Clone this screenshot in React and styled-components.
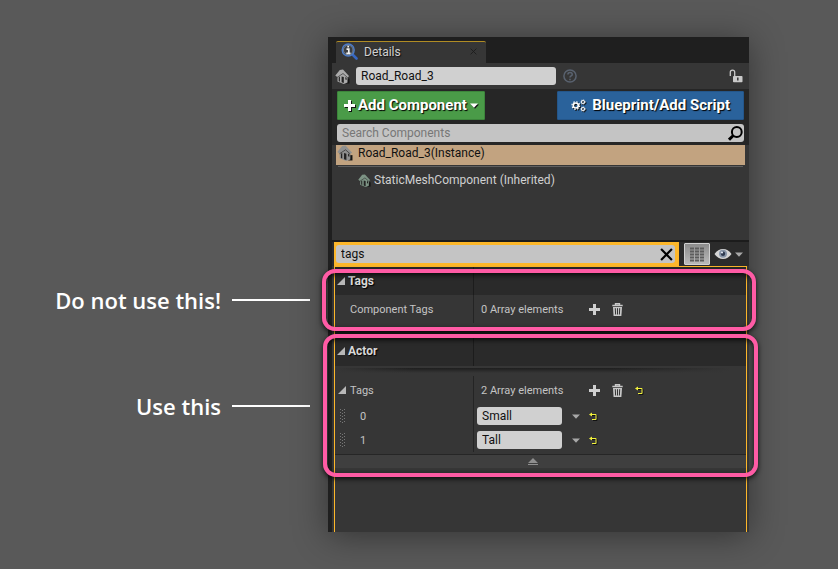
import React from 'react';
import styled, { createGlobalStyle } from 'styled-components';

const Global = createGlobalStyle`
  *, *::before, *::after { box-sizing: border-box; }
  body { margin: 0; background: #595959; font-family: Roboto, "Liberation Sans", sans-serif; font-size: 12px; color: #c4c4c4; }
  button, input { font: inherit; color: inherit; }
  svg { display: block; flex: none; }
`;

const Page = styled.main`
  min-height: 100vh;
  display: grid;
  grid-template-columns: 310px minmax(0, 1fr);
  column-gap: 18px;
  padding: 37px 89px 37px 0;
  overflow: hidden;
`;

const Callouts = styled.div`
  display: flex;
  flex-direction: column;
  gap: 74px;
  padding-top: 247px;
`;

const Callout = styled.p`
  display: flex;
  align-items: center;
  justify-content: flex-end;
  gap: 11px;
  margin: 0;
  height: 32px;
  color: #fff;
  font: 600 22px/32px "Open Sans", "Noto Sans", sans-serif;
  white-space: nowrap;

  &::after {
    content: "";
    width: 78px;
    height: 2px;
    background: #fff;
  }
`;

const Panel = styled.section`
  display: flex;
  flex-direction: column;
  padding-left: 4px;
  background: #1f1f1f;
  box-shadow: 0 4px 32px rgba(0, 0, 0, 0.42);
`;

const TabBar = styled.div`
  display: flex;
  padding: 4px 4px 0;
`;

const Tab = styled.div`
  display: flex;
  align-items: center;
  gap: 6px;
  width: 150px;
  height: 22px;
  padding: 0 9px 2px 5px;
  border-top: 1px solid #b08c24;
  border-radius: 2px 2px 0 0;
  background: #363636;
  color: #d0d0d0;
  text-shadow: 1px 1px 1px #111;
`;

const TabLabel = styled.span`
  flex: 1;
`;

const IconButton = styled.button`
  display: grid;
  place-items: center;
  flex: none;
  padding: 0;
  border: 0;
  background: none;
  color: ${(p) => p.$color || '#d0d0d0'};
`;

const NameRow = styled.div`
  display: flex;
  align-items: center;
  height: 26px;
  padding: 0 6px 0 3px;
  background: #363636;
`;

const Field = styled.input`
  width: ${(p) => p.$width || '100%'};
  height: 18px;
  min-width: 0;
  padding: 0 5px;
  border: 0;
  border-radius: 3px;
  outline: none;
  background: ${(p) => p.$bg || '#d0d0d0'};
  color: #111;
  font-size: 12px;
  &::placeholder { color: #777; opacity: 1; }
`;

const NameField = styled(Field)`
  margin: 0 7px 0 6px;
`;

const Spacer = styled.span`
  flex: 1;
`;

const ActionArea = styled.div`
  display: flex;
  flex-direction: column;
  gap: 4px;
  padding: 2px 5px 3px;
  background: #262626;
`;

const ActionRow = styled.div`
  display: flex;
  justify-content: space-between;
`;

const ActionButton = styled.button`
  display: flex;
  align-items: center;
  justify-content: center;
  gap: ${(p) => p.$gap};
  height: 29px;
  padding: ${(p) => p.$padding};
  border: 1px solid ${(p) => p.$edge};
  border-radius: 1px;
  background: ${(p) => p.$bg};
  color: #fff;
  font-size: 15px;
  font-weight: 700;
  text-shadow: 1px 1px 1px #000;
  white-space: nowrap;
  svg { filter: drop-shadow(1px 1px 0 #111); }
`;

const SearchBox = styled.label`
  display: flex;
  align-items: center;
  height: 18px;
  padding-right: 1px;
  border-radius: 3px;
  background: #c4c4c4;
  color: #000;
`;

const Tree = styled.ul`
  display: flex;
  flex-direction: column;
  height: 95px;
  margin: 0;
  padding: 0 4px;
  list-style: none;
  background: #363636;
`;

const TreeItem = styled.li`
  display: flex;
  align-items: center;
  gap: ${(p) => (p.$selected ? '5px' : '3px')};
  height: ${(p) => (p.$selected ? '20px' : '26px')};
  padding: ${(p) => (p.$selected ? '0 0 4px 1px' : '0 0 0 22px')};
  background: ${(p) => (p.$selected ? '#c2a380' : 'none')};
  color: ${(p) => (p.$selected ? '#111' : '#d0d0d0')};
`;

const TreeRule = styled.li`
  height: 1px;
  margin: 1px 2px 0;
  background: #606060;
`;

const FilterRow = styled.div`
  display: flex;
  padding: 0 6px 0 2px;
  border-top: 2px solid #1c1c1c;
  background: #2b2b2b;
`;

const FilterBox = styled.label`
  display: flex;
  flex: 1;
  height: 24px;
  padding: 3px 4px 3px 2px;
  background: #fdb72a;
`;

const FilterInner = styled.span`
  display: flex;
  flex: 1;
  align-items: center;
  padding-right: 2px;
  border-radius: 3px;
  background: #c4c4c4;
`;

const GridToggle = styled.button`
  display: grid;
  place-items: center;
  width: 26px;
  height: 22px;
  margin: 1px 4px 0 5px;
  padding: 0;
  border: 1px solid #d0d0d0;
  border-radius: 1px;
  background: linear-gradient(#8c8c8c, #bababa);
`;

const ViewButton = styled(IconButton)`
  display: flex;
  align-items: center;
  gap: 3px;
`;

const Frame = styled.div`
  flex: 1;
  margin: 0 2px 0 0;
  padding-bottom: 64px;
  border: solid #fdb72a;
  border-width: 1px 1px 0;
  background: #363636;
`;

const FrameGutter = styled.div`
  display: flex;
  flex: 1;
  flex-direction: column;
  padding-left: 2px;
  background: #363636;
`;

const Section = styled.section`
  position: relative;
  padding-bottom: ${(p) => p.$pad};
  background: #363636;
`;

const Separator = styled.div`
  height: 5px;
  background: #1e1e1e;
`;

const columns = '139px minmax(0, 1fr)';

const SectionHeader = styled.h2`
  display: grid;
  grid-template-columns: ${columns};
  height: ${(p) => p.$height};
  margin: 0;
  background: #2a2a2a;
  color: #d8d8d8;
  font-size: 12px;
  font-weight: 700;
  text-shadow: 1px 1px 1px #000;
`;

const HeaderCell = styled.span`
  display: flex;
  align-items: center;
  gap: 3px;
  padding-left: 2px;
  border-right: 1px solid #1c1c1c;
`;

const FadeRule = styled.div`
  height: 5px;
  margin: 2px 16px 3px 0;
  background: linear-gradient(90deg, #363636, transparent 20%, transparent 70%, #363636), linear-gradient(#1e1e1e, #363636);
`;

const Row = styled.div`
  display: grid;
  grid-template-columns: ${columns};
  height: ${(p) => p.$height};
  font-size: 11px;
`;

const NameCell = styled.div`
  display: flex;
  align-items: center;
  gap: ${(p) => p.$gap || '4px'};
  padding-left: ${(p) => p.$indent};
  border-right: 1px solid #242424;
`;

const ValueCell = styled.div`
  display: flex;
  align-items: center;
  padding-left: ${(p) => p.$indent || '7px'};
`;

const Count = styled.span`
  width: 108px;
`;

const Tools = styled.span`
  display: flex;
  align-items: center;
  gap: ${(p) => p.$gap || '12px'};
  margin-left: ${(p) => p.$inset || '0'};
`;

const Footer = styled.button`
  display: grid;
  place-items: center;
  width: 100%;
  height: 14px;
  margin-top: 2px;
  padding: 0 16px 0 0;
  border: 0;
  border-top: 1px solid #262626;
  background: #3f3f3f;
`;

const Highlight = styled.div`
  position: absolute;
  inset: ${(p) => p.$inset};
  z-index: 2;
  pointer-events: none;
  border: 4px solid #ff5ba5;
  border-radius: 13px;
  box-shadow: 0 2px 5px rgba(0, 0, 0, 0.75), inset 0 2px 5px rgba(0, 0, 0, 0.75);
`;

const InfoIcon = () => (
  <svg width="17" height="17" viewBox="0 0 17 17">
    <path d="M11.5 11.5l4 4" stroke="#3767c2" strokeWidth="2.6" strokeLinecap="round" />
    <circle cx="7.2" cy="7" r="6" fill="#30363f" stroke="#4d7cc8" strokeWidth="1.4" />
    <circle cx="7.2" cy="7" r="4.8" fill="#3b3e42" stroke="#99aecb" strokeWidth=".6" />
    <path d="M7.2 2.7v1.9M5.5 6.2h2.3v4M5.3 10.3h4.2" stroke="#f0f0f0" strokeWidth="1.7" fill="none" />
  </svg>
);

const HouseIcon = ({ size = 15, tone = '#aaa', dark = '#222' }) => (
  <svg width={size} height={size} viewBox="0 0 15 15">
    <path d="M10.500 9.500h4v5h-4z" fill="#151515" />
    <path d="M2.500 6L8 3.500 12.500 7v6.500L8.700 15 2.500 12.500z" fill={tone} />
    <path d="M.3 6.500L4.800 1l3.200-.5L14.200 7.200l-1.800 1L8 4.200 2.200 8z" fill={tone} />
    <path d="M3.700 8.200l1.200-.8v5.300l-1.200-.6zM6.600 7.500l2.200.6v6l-2.200-.8zM10.400 8l1.200.7v2.200l-1.200-.3z" fill={dark} />
    <path d="M2.400 8.200L8 4.500l4.400 3.900" fill="none" stroke={dark} strokeWidth=".6" />
  </svg>
);

const HelpIcon = () => (
  <svg width="14" height="14" viewBox="0 0 14 14" fill="none" stroke="#59626f" strokeWidth="1.5">
    <circle cx="7" cy="7" r="6.1" />
    <path d="M4.9 5.6c0-2.8 4.3-2.7 4.3-.2C9.200 7 7 6.900 7 8.600M7 9.700v1.500" strokeWidth="1.6" />
  </svg>
);

const LockIcon = () => (
  <svg width="14" height="14" viewBox="0 0 14 14">
    <path d="M1.300 7V3.200q0-2 2.200-2t2.200 2V7" fill="none" stroke="#c9c9c9" strokeWidth="1.300" />
    <rect x="4" y="7" width="9.500" height="6.200" rx=".8" fill="#c9c9c9" />
    <path d="M8.800 8.400v3.200" stroke="#333" strokeWidth="1.500" />
  </svg>
);

const PlusIcon = ({ size = 11 }) => (
  <svg width={size} height={size} viewBox="0 0 11 11">
    <path d="M4 0h3v4h4v3H7v4H4V7H0V4h4z" fill="currentColor" />
  </svg>
);

const CaretIcon = ({ width = 8, height = 5 }) => (
  <svg width={width} height={height} viewBox="0 0 8 5">
    <path d="M0 .5h8L4 4.700z" fill="currentColor" />
  </svg>
);

const GearsIcon = () => (
  <svg width="15" height="13" viewBox="0 0 15 13" fill="none" stroke="#fff">
    <circle cx="4.800" cy="6.500" r="2.500" strokeWidth="1.600" />
    <circle cx="4.800" cy="6.500" r="3.800" strokeWidth="1.200" strokeDasharray="1.490 1.490" />
    <circle cx="12" cy="3" r="1.500" strokeWidth="1.100" />
    <circle cx="12" cy="3" r="2.300" strokeWidth=".6" strokeDasharray="1 1" />
    <circle cx="12" cy="10" r="1.500" strokeWidth="1.100" />
    <circle cx="12" cy="10" r="2.300" strokeWidth=".6" strokeDasharray="1 1" />
  </svg>
);

const SearchIcon = () => (
  <svg width="15" height="15" viewBox="0 0 15 15" fill="none" stroke="#000">
    <circle cx="8.800" cy="6" r="4.900" strokeWidth="2" />
    <path d="M5.300 9.500L1 13.700" strokeWidth="3" />
  </svg>
);

const CloseIcon = ({ size = 12, stroke = 2 }) => (
  <svg width={size} height={size} viewBox="0 0 12 12">
    <path d="M1 1l10 10M11 1L1 11" stroke="currentColor" strokeWidth={stroke} />
  </svg>
);

const MatrixIcon = () => (
  <svg width="14" height="15" viewBox="0 0 14 15">
    <path d="M0 1.500h14M0 4.500h14M0 7.500h14M0 10.500h14M0 13.500h14" stroke="#5c5c5c" strokeWidth="2" strokeDasharray="4 1" />
  </svg>
);

const EyeIcon = () => (
  <svg width="18" height="12" viewBox="0 0 18 12">
    <path d="M.5 6Q4 1 9 1t8.500 5Q14 11 9 11T.5 6z" fill="#d5d5d5" />
    <circle cx="9" cy="5.700" r="4" fill="#8795a8" />
    <circle cx="9" cy="5.700" r="2.200" fill="#2e3a50" />
    <circle cx="8" cy="4.500" r="1.100" fill="#dde4ef" />
  </svg>
);

const TriangleIcon = () => (
  <svg width="8" height="8" viewBox="0 0 8 8">
    <path d="M8 0v8H0z" fill="#b8b8b8" />
  </svg>
);

const TrashIcon = () => (
  <svg width="11" height="13" viewBox="0 0 11 13">
    <path d="M3.500 2V.7h4V2M.3 2.500h10.400" fill="none" stroke="#c8c8c8" strokeWidth="1.400" />
    <path d="M1 4h9l-.6 9H1.600z" fill="#c8c8c8" />
    <path d="M3.300 5.200l.3 6.300M5.500 5.200v6.300M7.700 5.200l-.3 6.300" stroke="#333" strokeWidth="1" />
  </svg>
);

const ResetIcon = () => (
  <svg width="9" height="9" viewBox="0 0 9 9" fill="none">
    <path d="M2 3.500h6v5H4" stroke="#111" />
    <path d="M1 2.500h6v5H3" stroke="#f2f23c" />
    <path d="M0 2.500L3 .5v4z" fill="#f2f23c" />
  </svg>
);

const GripIcon = () => (
  <svg width="5" height="15" viewBox="0 0 5 15">
    <path d="M.5 0v15M2.500 1v14M4.500 0v15" stroke="#777" strokeDasharray="1 2" />
  </svg>
);

const EjectIcon = () => (
  <svg width="10" height="8" viewBox="0 0 10 8">
    <path d="M5 0l5 5H0zM0 6h10v1H0z" fill="#8f8f8f" />
  </svg>
);

const ArrayRow = ({ name, count, indent, expandable, resettable }) => (
  <Row $height="28px">
    <NameCell $indent={indent}>
      {expandable && <IconButton aria-label={`Collapse ${name}`}><TriangleIcon /></IconButton>}
      {name}
    </NameCell>
    <ValueCell>
      <Count>{count} Array elements</Count>
      <Tools>
        <IconButton aria-label="Add element"><PlusIcon /></IconButton>
        <IconButton aria-label="Remove all elements"><TrashIcon /></IconButton>
        {resettable && <IconButton aria-label={`Reset ${name}`}><ResetIcon /></IconButton>}
      </Tools>
    </ValueCell>
  </Row>
);

const ElementRow = ({ index, value }) => (
  <Row $height="24px">
    <NameCell $indent="5px" $gap="15px">
      <GripIcon />
      <label htmlFor={`tag-${index}`}>{index}</label>
    </NameCell>
    <ValueCell $indent="3px">
      <Field id={`tag-${index}`} $width="85px" defaultValue={value} />
      <Tools $gap="9px" $inset="10px">
        <IconButton $color="#a8a8a8" aria-label="Element options"><CaretIcon /></IconButton>
        <IconButton aria-label={`Reset element ${index}`}><ResetIcon /></IconButton>
      </Tools>
    </ValueCell>
  </Row>
);

const Header = ({ title, height }) => (
  <SectionHeader $height={height}>
    <HeaderCell>
      <IconButton aria-label={`Collapse ${title}`}><TriangleIcon /></IconButton>
      {title}
    </HeaderCell>
  </SectionHeader>
);

export default function App() {
  return (
    <>
      <Global />
      <Page>
        <Callouts>
          <Callout>Do not use this!</Callout>
          <Callout>Use this</Callout>
        </Callouts>
        <Panel aria-label="Details">
          <TabBar>
            <Tab>
              <InfoIcon />
              <TabLabel>Details</TabLabel>
              <IconButton $color="#1d1d1d" aria-label="Close tab"><CloseIcon size={7} stroke={1.5} /></IconButton>
            </Tab>
          </TabBar>
          <NameRow>
            <HouseIcon />
            <NameField aria-label="Actor name" $width="200px" defaultValue="Road_Road_3" />
            <IconButton aria-label="Help"><HelpIcon /></IconButton>
            <Spacer />
            <IconButton aria-label="Lock selection"><LockIcon /></IconButton>
          </NameRow>
          <ActionArea>
            <ActionRow>
              <ActionButton $bg="#4a9b48" $edge="#3c853b" $gap="3px" $padding="0 6px 1px">
                <PlusIcon />Add Component<CaretIcon />
              </ActionButton>
              <ActionButton $bg="#2a629b" $edge="#24568a" $gap="6px" $padding="0 13px 1px">
                <GearsIcon />Blueprint/Add Script
              </ActionButton>
            </ActionRow>
            <SearchBox>
              <Field aria-label="Search components" placeholder="Search Components" $bg="transparent" />
              <SearchIcon />
            </SearchBox>
          </ActionArea>
          <Tree>
            <TreeItem $selected><HouseIcon size={16} tone="#8f9090" />Road_Road_3(Instance)</TreeItem>
            <TreeRule role="separator" />
            <TreeItem><HouseIcon size={13} tone="#7d9485" />StaticMeshComponent (Inherited)</TreeItem>
          </Tree>
          <FilterRow>
            <FilterBox>
              <FilterInner>
                <Field aria-label="Filter details" defaultValue="tags" $bg="transparent" />
                <IconButton $color="#000" aria-label="Clear filter"><CloseIcon size={13} /></IconButton>
              </FilterInner>
            </FilterBox>
            <GridToggle aria-label="Property matrix"><MatrixIcon /></GridToggle>
            <ViewButton $color="#a8a8a8" aria-label="View options"><EyeIcon /><CaretIcon /></ViewButton>
          </FilterRow>
          <FrameGutter>
            <Frame>
              <Section $pad="8px">
                <Header title="Tags" height="28px" />
                <ArrayRow name="Component Tags" count={0} indent="15px" />
                <Highlight $inset="2px -10px 0 -13px" />
              </Section>
              <Separator />
              <Section $pad="0">
                <Header title="Actor" height="30px" />
                <FadeRule />
                <ArrayRow name="Tags" count={2} indent="3px" expandable resettable />
                <ElementRow index={0} value="Small" />
                <ElementRow index={1} value="Tall" />
                <Footer aria-label="Hide advanced properties"><EjectIcon /></Footer>
                <Highlight $inset="-2px -12px -9px -12px" />
              </Section>
            </Frame>
          </FrameGutter>
        </Panel>
      </Page>
    </>
  );
}
